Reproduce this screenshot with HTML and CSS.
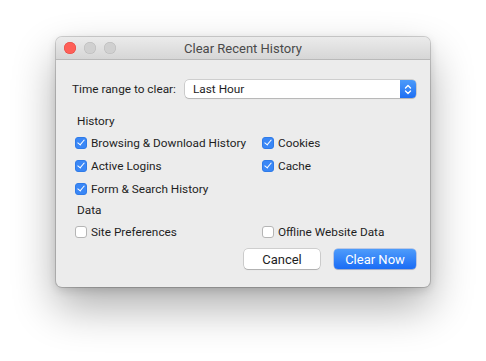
FILE: index.html
```html
<!DOCTYPE html>
<html lang="en">
<head>
    <meta charset="UTF-8">
    <title>Clear Recent History</title>
    <link rel="stylesheet" href="styles.css">
</head>
<body>
    <div class="desktop">
        <div class="window">
            <div class="titlebar">
                <div class="lights">
                    <span class="light light-close"></span>
                    <span class="light"></span>
                    <span class="light"></span>
                </div>
                <div class="title">Clear Recent History</div>
            </div>

            <div class="content">
                <div class="range-row">
                    <span class="range-label">Time range to clear:</span>
                    <div class="select">
                        <span class="select-value">Last Hour</span>
                        <span class="stepper">
                            <svg width="8" height="11" viewBox="0 0 8 11">
                                <path d="M1.5 4 L4 1.5 L6.5 4 M1.5 7 L4 9.5 L6.5 7" fill="none" stroke="#fff" stroke-width="1.4" stroke-linecap="round" stroke-linejoin="round"/>
                            </svg>
                        </span>
                    </div>
                </div>

                <div class="section-label">History</div>
                <div class="checks">
                    <label class="check-row"><span class="box checked"></span>Browsing &amp; Download History</label>
                    <label class="check-row"><span class="box checked"></span>Cookies</label>
                    <label class="check-row"><span class="box checked"></span>Active Logins</label>
                    <label class="check-row"><span class="box checked"></span>Cache</label>
                    <label class="check-row"><span class="box checked"></span>Form &amp; Search History</label>
                </div>

                <div class="section-label">Data</div>
                <div class="checks">
                    <label class="check-row"><span class="box"></span>Site Preferences</label>
                    <label class="check-row"><span class="box"></span>Offline Website Data</label>
                </div>

                <div class="buttons">
                    <button class="btn">Cancel</button>
                    <button class="btn btn-primary">Clear Now</button>
                </div>
            </div>
        </div>
    </div>
</body>
</html>
```

FILE: styles.css
```css
body {
    margin: 0;
    background: #ffffff;
    font-family: Roboto, "Liberation Sans", sans-serif;
    font-size: 11.8px;
    color: #1e1e1e;
}

.desktop {
    height: 361px;
    padding: 37px 0 0 56px;
    box-sizing: border-box;
    overflow: hidden;
}

.window {
    width: 374px;
    height: 250px;
    background: #ececec;
    border-radius: 6px;
    overflow: hidden;
    box-shadow: 0 0 0 1px rgba(0,0,0,0.16), 0 20px 44px rgba(0,0,0,0.32), 0 3px 10px rgba(0,0,0,0.14);
}

.titlebar {
    height: 22px;
    display: flex;
    align-items: center;
    position: relative;
    background: linear-gradient(#ebebeb, #d6d6d6);
    border-bottom: 1px solid #b9b9b9;
}

.lights {
    display: flex;
    gap: 8px;
    padding-left: 8px;
}

.light {
    width: 12px;
    height: 12px;
    border-radius: 50%;
    background: #d0d0d0;
    box-shadow: inset 0 0 0 0.5px #b8b8b8;
}

.light-close {
    background: #fe5f57;
    box-shadow: inset 0 0 0 0.5px #e0443e;
}

.title {
    position: absolute;
    left: 0;
    right: 0;
    text-align: center;
    font-size: 13px;
    color: #4a4a4a;
}

.content {
    padding: 20px 14px 0 16px;
}

.range-row {
    display: flex;
    align-items: center;
    height: 18px;
}

.range-label {
    width: 113px;
    white-space: nowrap;
}

.select {
    flex: 1;
    height: 18px;
    display: flex;
    align-items: center;
    background: #ffffff;
    border-radius: 4px;
    box-shadow: 0 0 0 0.5px rgba(0,0,0,0.25), 0 1px 1px rgba(0,0,0,0.12);
    overflow: hidden;
}

.select-value {
    flex: 1;
    padding-left: 8px;
}

.stepper {
    width: 16px;
    height: 18px;
    display: flex;
    align-items: center;
    justify-content: center;
    background: linear-gradient(#4c9bfa, #1e6ff3);
}

.section-label {
    height: 20px;
    line-height: 20px;
    padding-left: 5px;
}

.range-row + .section-label {
    margin-top: 13px;
}

.checks {
    display: grid;
    grid-template-columns: 187px 1fr;
    padding-left: 3px;
}

.check-row {
    height: 23px;
    display: flex;
    align-items: center;
    gap: 4px;
}

.box {
    width: 12px;
    height: 12px;
    box-sizing: border-box;
    border-radius: 3px;
    background: #ffffff;
    border: 1px solid #b5b5b5;
    display: flex;
    align-items: center;
    justify-content: center;
}

.box.checked {
    background: #3a87f6;
    border-color: #2f7be8;
}

.box.checked::after {
    content: "";
    width: 3px;
    height: 6px;
    border: solid #ffffff;
    border-width: 0 1.5px 1.5px 0;
    transform: translateY(-1px) rotate(40deg);
}

.buttons {
    display: flex;
    justify-content: flex-end;
    gap: 14px;
    margin-top: 6px;
}

.btn {
    height: 20px;
    border: none;
    border-radius: 4px;
    background: #ffffff;
    font-family: inherit;
    font-size: 13px;
    color: #1e1e1e;
    box-shadow: 0 0 0 0.5px rgba(0,0,0,0.25), 0 1px 1px rgba(0,0,0,0.15);
    width: 76px;
    padding: 0;
}

.btn-primary {
    width: 82px;
    color: #ffffff;
    background: linear-gradient(#4e9cfb, #1a6cf5);
    box-shadow: 0 0 0 0.5px rgba(0,60,200,0.4), 0 1px 1px rgba(0,0,0,0.15);
}
```
